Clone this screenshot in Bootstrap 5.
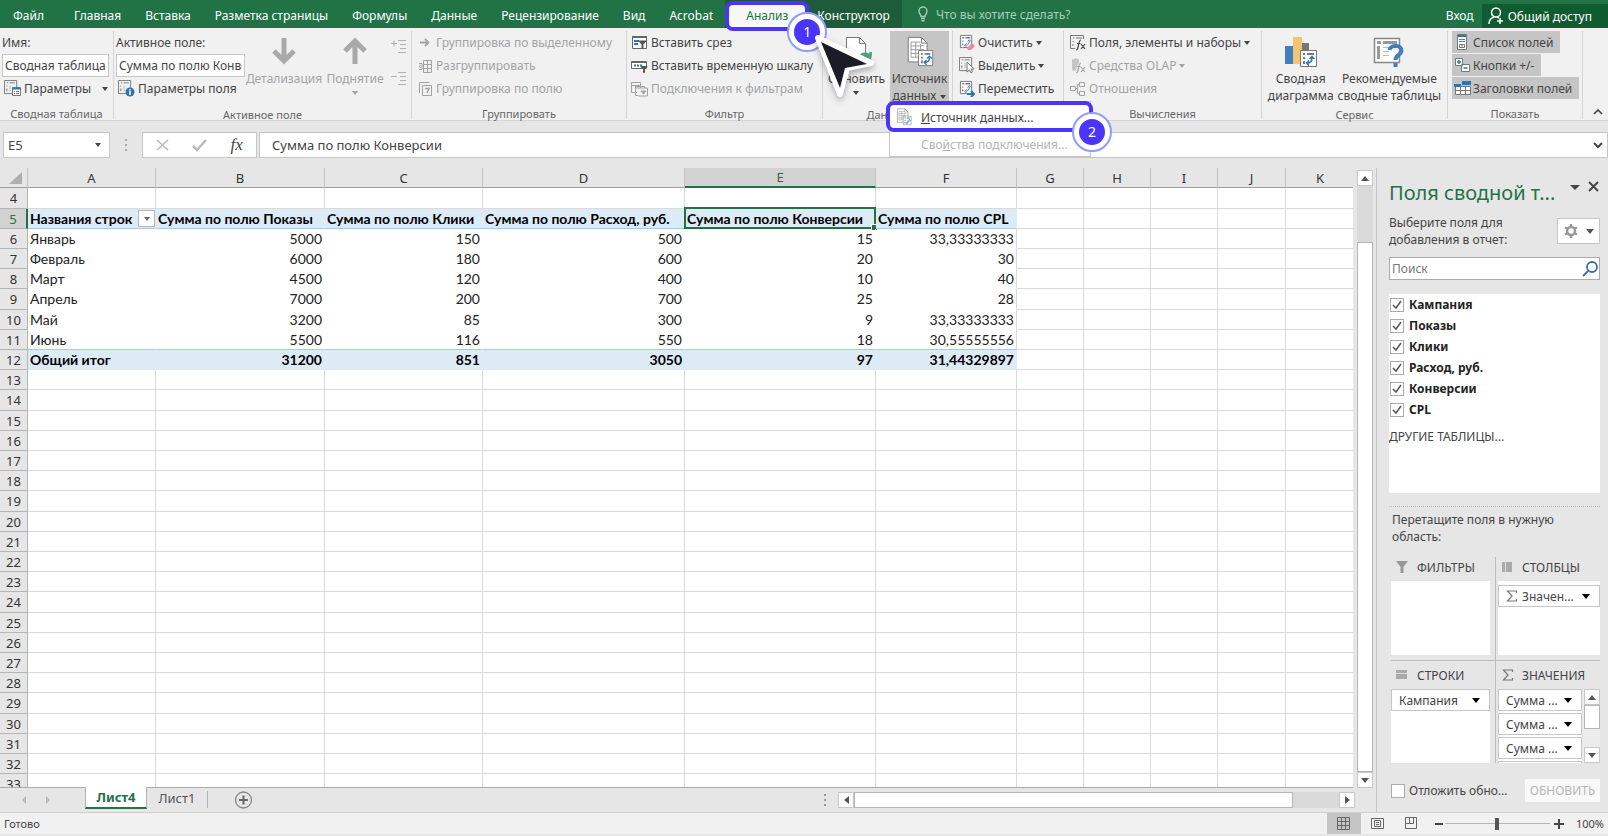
<!DOCTYPE html>
<html lang="ru">
<head>
<meta charset="utf-8">
<meta name="viewport" content="width=device-width, initial-scale=1">
<title>Сводная таблица</title>
<link href="https://cdn.jsdelivr.net/npm/bootstrap@5.3.0/dist/css/bootstrap.min.css" rel="stylesheet">
<style>
:root { --green:#217346; --deep:#0e5c2f; --chrome:#e6e6e6; --line:#d4d4d4; --accent:#4a35ff; }
body { font-family:"Noto Sans","Open Sans",sans-serif; font-size:12px; line-height:17px; color:#444; background:#fff; }
button, input { font:inherit; color:inherit; }
button { background:none; border:0; padding:0; white-space:nowrap; }
svg { display:block; flex:none; fill:none; }
svg:not([stroke]) { stroke:currentColor; }
.app { height:100vh; background:var(--chrome); padding-bottom:2px; }

/* Tab strip */
.tabstrip { height:28px; background:var(--green); color:#fff; position:relative; z-index:3; white-space:nowrap; }
.tabstrip a { color:#fff; text-decoration:none; padding:0 12px; height:28px; line-height:31px; display:block; }
.tabstrip .file-tab { padding:0 18px 0 13px; }
.tabstrip .context-tabs { background:#1d5b3a; }
.tabstrip a.current { position:relative; isolation:isolate; color:var(--green); padding:0 17px 0 21px; }
.tabstrip a.current::before { content:""; position:absolute; z-index:-1; inset:1px -4px -3px 0; background:#f7f7f7; border:4px solid var(--accent); border-radius:8px; }
.tell { color:#a9cdb8; line-height:31px; }
.share { background:var(--deep); height:24px; margin-top:4px; color:#fff; padding:0 16px 0 6px; }
.marker { position:absolute; z-index:6; width:40px; height:40px; border-radius:50%; border:2px solid #8f9bff; background:#fff; display:grid; place-items:center; }
.marker b { width:26px; height:26px; border-radius:50%; background:var(--accent); color:#fff; font-weight:400; font-size:14px; line-height:26px; text-align:center; }
.marker-1 { right:-22px; top:12px; }
.pointer { position:absolute; left:85px; top:29px; z-index:7; stroke-linejoin:round; filter:drop-shadow(0 3px 3px rgba(0,0,0,.3)); }

/* Ribbon */
.ribbon { background:#f1f1f1; border-bottom:1px solid var(--line); height:94px; padding-top:3px; }
.rgroup { flex:none; display:flex; flex-direction:column; position:relative; height:88px; border-right:1px solid #d5d5d5; }
.rgroup h6 { font-size:11px; font-weight:400; line-height:17px; margin:5px 0 0; text-align:center; color:#666; }
.rbody { height:70px; display:flex; }
.rcol > * { height:23px; display:flex; align-items:center; gap:3px; white-space:nowrap; }
.pad-s { padding-left:2px; }
.pad-m { padding-left:6px; }
.off { color:#a3a3a3; }
.rcol input, .field { background:#fff; border:1px solid #c6c6c6; height:23px; padding:0 2px; }
.big { text-align:center; height:70px; display:flex; flex-direction:column; align-items:center; white-space:nowrap; }
.big svg.pic { margin-top:5px; margin-bottom:1px; }
.big .lines { line-height:17px; margin-top:1px; }
.dd { display:inline-block; width:0; height:0; border:3px solid transparent; border-top:4px solid currentColor; border-bottom:0; margin-left:4px; flex:none; }
.pressed { background:#c5c5c5; }
.w-a{width:114px}.w-b{width:298px}.w-c{width:215px}.w-d{width:196px}.w-e{width:130px}.w-f{width:111px}.w-g{width:198px}.w-h{width:186px}.w-i{width:135px}
.toggle { background:#c5c5c5; height:22px!important; margin-bottom:1px; padding:0 7px 0 2px; align-self:flex-start; gap:2px!important; }
.source-menu { position:absolute; z-index:5; left:66px; top:70px; width:202px; height:56px; background:#fff; border:1px solid #c6c6c6; }
.source-menu button { display:flex; align-items:center; height:28px; width:100%; gap:8px; padding-left:5px; padding-top:2px; }
.source-menu button + button { padding-left:31px; color:#b4b4b4; padding-top:0; }
.source-menu::after { content:""; position:absolute; left:-4px; top:-1px; width:207px; height:31px; border:4px solid var(--accent); border-radius:8px; }
.marker-2 { right:-22px; top:10px; }

/* Formula bar */
.formula { padding:11px 0 10px 3px; font-size:13px; }
.formula > .field { height:26px; }
.fx { font:italic 17px/22px "Liberation Serif",serif; color:#444; }

/* Sheet */
.sheet { table-layout:fixed; width:1355px; border-collapse:separate; border-spacing:0; background:#fff; color:#222; font:14px/18px Lato,sans-serif; }
.sheet th { background:var(--chrome); font:13px/18px "Noto Sans",sans-serif; color:#333; text-align:center; padding:0; border-right:1px solid #b5b5b5; border-bottom:1px solid #b5b5b5; }
.sheet thead th { height:20px; border-right-color:#c2c2c2; border-bottom-color:#9f9f9f; }
.sheet td { padding:0 2px; border-right:1px solid #dadada; border-bottom:1px solid #dadada; white-space:nowrap; position:relative; }
.sheet tbody tr { height:20px; }
.sheet tbody tr:nth-child(5n+1) { height:21px; }
.sheet td.num { text-align:right; }
.sheet td.pv { border-color:#fff; }
.sheet td.pv.last { border-right-color:#dadada; }
.sheet .band td.pv { background:#ddebf7; color:#000; font-weight:700; border-right-color:#ddebf7; border-bottom-color:#a9c9e4; }
.sheet .total td.pv { border-bottom-color:#ddebf7; }
.sheet .pre-total td.pv { border-bottom-color:#a9c9e4; }
.sheet th.on { background:#d2d2d2; color:var(--green); }
.sheet thead th.on { border-bottom:2px solid var(--green); }
.sheet tbody th.on { border-right:2px solid var(--green); }
.sel::before { content:""; position:absolute; inset:-2px -1px -1px -1px; border:2px solid var(--green); }
.sel::after { content:""; position:absolute; right:-3px; bottom:-3px; width:5px; height:5px; background:var(--green); border:1px solid #fff; box-sizing:content-box; }
.pick { position:absolute; right:0; top:1px; width:17px; height:17px; background:#fff; border:1px solid #b5b5b5; display:grid; place-items:center; color:#666; }
.pick .dd { margin:0; }
.edge { border-bottom:1px solid #ababab; }
.vscroll { width:23px; padding:2px 3px 0 4px; }
.sbtn { width:16px; height:16px; background:#fff; border:1px solid #c8c8c8; display:grid; place-items:center; color:#555; flex:none; }
.track { background:#dadada; }
.thumb { background:#fff; border:1px solid #b5b5b5; }
.tri { fill:currentColor; stroke:none; }
.sheetbar { height:24px; }
.sheetbar .tab-on { background:#fff; border:1px solid #b5b5b5; border-width:0 1px; border-bottom:2px solid var(--green); color:var(--green); font-weight:700; width:62px; height:22px; line-height:18px; margin-top:-1px; font-size:13px; }
.sheetbar .tab-off { font-size:13px; line-height:18px; width:60px; height:20px; color:#555; }
.hbar { width:556px; }
.hbar .thumb, .hbar .track { height:16px; }
.statusbar { height:22px; background:#f1f1f1; border-top:1px solid #cfcfcf; font-size:11px; padding-left:4px; }
.statusbar .view { width:34px; height:21px; display:grid; place-items:center; color:#666; }
.zoomer { appearance:none; width:105px; height:14px; background:linear-gradient(#b5b5b5,#b5b5b5) center/100% 1px no-repeat; }
.zoomer::-webkit-slider-thumb { appearance:none; width:4px; height:12px; background:#555; }

/* Field pane */
.pane { width:232px; border-left:1px solid #c6c6c6; padding:12px 8px 0 12px; flex:none; }
.pane h1 { font-size:20px; line-height:26px; font-weight:400; color:var(--green); margin:0; white-space:nowrap; }
.search { height:23px; border:1px solid #ababab; background:#fff; margin-top:9px; }
.search input { border:0; background:none; outline:0; padding:0 2px; width:100%; min-width:0; }
.search input::placeholder { color:#777; opacity:1; }
.fields { background:#fff; height:199px; margin-top:14px; }
.fields label { display:flex; align-items:center; height:21px; gap:5px; padding-left:1px; font-weight:700; color:#222; }
.box { appearance:none; width:14px; height:14px; border:1px solid #ababab; background:#fff; margin:0; flex:none; }
.box:checked { background:#fff url("data:image/svg+xml,%3Csvg xmlns='http://www.w3.org/2000/svg' viewBox='0 0 12 12'%3E%3Cpath d='M2 6l3 3 5-7' fill='none' stroke='%23555' stroke-width='1.5'/%3E%3C/svg%3E") center/12px; }
.hint { border-top:1px dotted #bbb; margin:13px 0 12px; padding:4px 0 0 3px; }
.zones { display:grid; grid-template-columns:105px 1fr; padding-left:2px; }
.zone { height:103px; padding-left:2px; }
.zone:nth-child(odd) { border-right:1px solid #bdbdbd; padding-right:5px; padding-left:0; }
.zone:nth-child(n+3) { border-top:1px solid #bdbdbd; padding-top:4px; }
.zone h2 { font-size:12px; line-height:17px; font-weight:400; margin:0; height:24px; display:flex; align-items:center; gap:8px; padding:0 0 4px 4px; }
.zone h2 svg { color:#999; }
.zwell { background:#fff; height:74px; overflow:hidden; }
.pill { display:flex; align-items:center; justify-content:space-between; width:100%; height:22px; border:1px solid #c6c6c6; background:#fff; padding:0 9px 0 7px; margin-bottom:2px; }
.pill .dd, .solid .dd { border-width:5px 4px 0; color:#000; margin:0; }
.solid .dd { color:#555; }
.update { background:#f9f9f9; color:#b5b5b5; height:23px; width:75px; text-align:center; }
</style>
</head>
<body>
<svg width="0" height="0" class="position-absolute" aria-hidden="true">
  <defs>
    <symbol id="pivot" viewBox="0 0 16 16"><path d="M.5.5h13v14H.5zM3 3h1.500M6 3h5.500M3 6v1M3 9v3" stroke="#777"/><path d="M6.500 6v6" stroke="#bbb"/></symbol>
    <symbol id="swirl" viewBox="0 0 16 16"><path d="M1.500 1.500h12v13h-12z" fill="#fff" stroke="#777"/><path d="M3.500 4h2M7 4h5M4 7v1M4 10v2" stroke="#777" stroke-width="1.500"/><path d="M7 12c3 0 4-2 4-5M9 8l2-2 2 2M8 10l-2 2 2 2" stroke="#2e75b6"/></symbol>
    <symbol id="sheets" viewBox="0 0 30 34"><path d="M2.500 1.500h14l6 6v20h-20z" fill="#fff" stroke="#777"/><path d="M16.500 1.500v6h6" stroke="#777"/><path d="M5.500 6.500h10M5.500 10.500h14M5.500 14.500h14M5.500 18.500h14M5.500 22.500h14M5.500 6.500v16M10.500 6.500v16M15.500 8.500v14" stroke="#999"/><path d="M13.500 15.500h15v16h-15z" fill="#fff" stroke="#777"/><path d="M16 19h2M20 19h6M17 22v2M17 26v3" stroke="#777" stroke-width="2"/><path d="M20 28c3 0 5-2 5-5M22.500 24l2.500-2.500 2.500 2.500M22 25.500L19.500 28l2.500 2.500" stroke="#2e75b6" stroke-width="1.500"/></symbol>
    <symbol id="sigma" viewBox="0 0 12 12"><path d="M10.500 3V1h-9l4.500 5-4.500 5h9V9" stroke="#777" stroke-width="1.200"/></symbol>
  </defs>
</svg>

<div class="app d-flex flex-column overflow-hidden">
  <header class="tabstrip d-flex">
    <nav class="d-flex" aria-label="Вкладки ленты">
      <a class="file-tab" href="#">Файл</a><a href="#">Главная</a><a href="#">Вставка</a><a href="#">Разметка страницы</a><a href="#">Формулы</a><a href="#">Данные</a><a href="#">Рецензирование</a><a href="#">Вид</a><a href="#">Acrobat</a>
      <div class="context-tabs d-flex">
        <a class="current" href="#" aria-current="page">Анализ
          <span class="marker marker-1"><b>1</b></span>
          <svg class="pointer" width="64" height="74" viewBox="0 0 64 74"><path d="M8 9l53 25-24 5-7 26z" fill="#fff" stroke="#fff" stroke-width="6"/><path d="M11 13l46 22-22 4-5 20z" fill="#1a1c26" stroke="none"/></svg>
        </a>
        <a href="#">Конструктор</a>
      </div>
    </nav>
    <div class="tell d-flex align-items-center ps-3 gap-2">
      <svg width="10" height="16" viewBox="0 0 10 16" stroke-width="1.400"><path d="M3 10.500C3 8.500 1 8 1 5a4 4 0 0 1 8 0c0 3-2 3.500-2 5.500zM3 12.500h4M3.500 14.800h3"/></svg>
      <span>Что вы хотите сделать?</span>
    </div>
    <div class="ms-auto d-flex">
      <a class="px-2" href="#">Вход</a>
      <button class="share d-flex align-items-center gap-1"><svg width="16" height="18" viewBox="0 0 16 18" stroke-width="1.500"><circle cx="8" cy="5.500" r="4.500"/><path d="M1 17c0-4 2-6 5-7M9 10l2 1M12 11v6M9 14h6"/></svg>Общий доступ</button>
    </div>
  </header>

  <section class="ribbon d-flex" aria-label="Лента">
    <div class="rgroup w-a">
      <div class="rbody"><div class="rcol flex-fill pad-s pe-1">
        <label for="pname">Имя:</label>
        <input id="pname" class="w-100" value="Сводная таблица1">
        <button class="pad-s"><svg width="17" height="17"><use href="#pivot" width="15" height="15"/><path d="M8.500 7.500h8v8h-8z" fill="#fff" stroke="#777"/><path d="M9 8.500h7" stroke="#2e75b6" stroke-width="2"/><path d="M10 11.500h1M12 11.500h3M10 13.500h1M12 13.500h3" stroke="#777"/></svg>Параметры<i class="dd ms-2"></i></button>
      </div></div>
      <h6>Сводная таблица</h6>
    </div>
    <div class="rgroup w-b">
      <div class="rbody">
        <div class="rcol pad-s" style="width:131px">
          <label for="afield">Активное поле:</label>
          <input id="afield" class="w-100" value="Сумма по полю Конверсии">
          <button class="pad-s"><svg width="17" height="17"><use href="#pivot" width="15" height="15"/><circle cx="12" cy="12" r="4.500" fill="#2e75b6" stroke="none"/><path d="M12 9v1.500M12 11v4" stroke="#fff" stroke-width="1.500"/></svg>Параметры поля</button>
        </div>
        <button class="big off" style="width:78px"><svg class="pic" width="30" height="32" viewBox="0 0 30 32" stroke-width="5" stroke="#a9a9a9"><path d="M15 2v23M5 15l10 10 10-10"/></svg><span class="lines">Детализация</span></button>
        <button class="big off" style="width:64px"><svg class="pic" width="30" height="32" viewBox="0 0 30 32" stroke-width="5" stroke="#a9a9a9"><path d="M15 28V5M5 15L15 5l10 10"/></svg><span class="lines">Поднятие<br><i class="dd m-0 align-top mt-1"></i></span></button>
        <div class="off d-flex flex-column gap-3 pt-2 ps-1">
          <button aria-label="Развернуть поле"><svg width="16" height="16" viewBox="0 0 16 16"><path d="M7 1.500h8M9 5.500h6M9 9.500h6M7 13.500h8M0 4.500h6M3 1.500v6" stroke="#b0b0b0"/></svg></button>
          <button aria-label="Свернуть поле"><svg width="16" height="16" viewBox="0 0 16 16"><path d="M7 1.500h8M9 5.500h6M9 9.500h6M7 13.500h8M0 5.500h6" stroke="#b0b0b0"/></svg></button>
        </div>
      </div>
      <h6>Активное поле</h6>
    </div>
    <div class="rgroup w-c">
      <div class="rbody rcol flex-column pad-m off">
        <button><svg width="15" height="16" viewBox="0 0 15 16"><path d="M2 7.500h8M7 4l3.500 3.500L7 11" stroke-width="1.800"/></svg>Группировка по выделенному</button>
        <button><svg width="15" height="16" viewBox="0 0 15 16"><path d="M5.500 2.500h8v12h-8zM9.500 2.500v12M5.500 6.500h8M5.500 10.500h8M1 5.500h3v6H1M3 7l-2 1.500L3 10"/></svg>Разгруппировать</button>
        <button><svg width="15" height="16" viewBox="0 0 15 16"><path d="M1.500 12V1.500h10M4.500 4.500h9v10h-9z"/><path d="M7 7.500h4L9 12" stroke-width="1.500"/></svg>Группировка по полю</button>
      </div>
      <h6>Группировать</h6>
    </div>
    <div class="rgroup w-d">
      <div class="rbody rcol flex-column ps-1">
        <button><svg width="17" height="16" viewBox="0 0 17 16"><path d="M1.500 1.500h14v12h-14z" fill="#fff" stroke="#666"/><path d="M1 2h15" stroke="#666" stroke-width="2"/><path d="M3 6h5M3 9h4" stroke="#2e75b6" stroke-width="2"/><path d="M8 6h7l-3 3.500V13h-1V9.500z" fill="#555" stroke="#555"/></svg>Вставить срез</button>
        <button><svg width="17" height="16" viewBox="0 0 17 16"><path d="M.5 3.500h15v7H.5z" fill="#fff" stroke="#666"/><path d="M1 4h14" stroke="#666" stroke-width="2"/><path d="M3 7.500h8" stroke="#2e75b6" stroke-width="2" stroke-dasharray="2 1"/><path d="M10 8.500h6l-2.500 3v3h-1v-3z" fill="#555" stroke="#555"/></svg>Вставить временную шкалу</button>
        <button class="off"><svg width="17" height="16" viewBox="0 0 17 16"><path d="M.5 1.500h9v10h-9zM1 4.500h8M4.500 5.500h9v9h-9z"/><path d="M4.500 7h12v8h-9" fill="#f1f1f1"/><path d="M10 10h5l-2.500 3z" fill="currentColor"/></svg>Подключения к фильтрам</button>
      </div>
      <h6>Фильтр</h6>
    </div>
    <div class="rgroup w-e">
      <div class="rbody">
        <button class="big" style="width:67px"><svg class="pic" width="30" height="32" viewBox="0 0 30 32"><path d="M4.500 1.500h13l6 6v20h-19z" fill="#fff" stroke="#777"/><path d="M17.500 1.500v6h6" stroke="#777"/><path d="M18 21c2-4 8-4 10 0l1-5M28 21h-6" stroke="#4ca582" stroke-width="3"/></svg><span class="lines">Обновить<br><i class="dd m-0 align-top mt-1"></i></span></button>
        <button class="big pressed" style="width:59px" aria-expanded="true"><svg class="pic" width="30" height="32"><use href="#sheets"/></svg><span class="lines">Источник<br>данных<i class="dd align-middle"></i></span></button>
      </div>
      <h6>Данные</h6>
      <div class="source-menu">
        <button><svg width="18" height="18"><use href="#sheets"/></svg><span><u>И</u>сточник данных...</span></button>
        <button><span>Сво<u>й</u>ства подключения...</span></button>
        <span class="marker marker-2"><b>2</b></span>
      </div>
    </div>
    <div class="rgroup w-f">
      <div class="rbody rcol flex-column pad-m">
        <button><svg width="16" height="17"><use href="#swirl" width="15" height="15"/><path d="M8 14l5-5 3 3-4 4H9z" fill="#ee8796" stroke="none"/></svg>Очистить<i class="dd ms-0"></i></button>
        <button><svg width="16" height="17"><use href="#pivot" width="15" height="15"/><path d="M8 5v10l2.500-2 1.500 3 1.500-1-1.500-3h3z" fill="#fff" stroke="#777"/></svg>Выделить<i class="dd ms-0"></i></button>
        <button><svg width="16" height="17"><use href="#swirl" width="15" height="15"/><path d="M8 14h7M12 11l3 3-3 3" stroke="#2e75b6" stroke-width="2"/></svg>Переместить</button>
      </div>
    </div>
    <div class="rgroup w-g">
      <div class="rbody rcol flex-column pad-m">
        <button><svg width="16" height="17" viewBox="0 0 16 17"><path d="M5 14.500H.5v-13h13V5M3 4h1.500M6 4h6M3 7v1M3 10v2" stroke="#777"/><path d="M6 16c2 0 2-2 2.500-5S9.500 6 11 6M7 9.500h3.500M11 10l4 5M15 10l-4 5" stroke="#444" stroke-width="1.200"/></svg>Поля, элементы и наборы<i class="dd ms-0"></i></button>
        <button class="off"><svg width="16" height="17" viewBox="0 0 16 17"><path d="M2 3c0-2 7-2 7 0v3c-3 2-2 8-4 8-2 0-3-1-3-1z" fill="#c6c6c6" stroke="none"/><path d="M6 16c2 0 2-2 2.500-5S9.500 6 11 6M7 9.500h3.500M11 10l4 5M15 10l-4 5" stroke-width="1.200"/></svg>Средства OLAP<i class="dd ms-0"></i></button>
        <button class="off"><svg width="16" height="16" viewBox="0 0 16 16"><path d="M.5 5.500h5v4h-5zM9.500 1.500h5v4h-5zM9.500 10.500h5v4h-5zM5.500 7.500h2M9.500 3.500h-2v9h2"/></svg>Отношения</button>
      </div>
      <h6>Вычисления</h6>
    </div>
    <div class="rgroup w-h">
      <div class="rbody justify-content-center gap-1">
        <button class="big"><svg class="pic" width="34" height="32" viewBox="0 0 34 32"><path d="M1 10h8v18H1z" fill="#3f7fbf" stroke="none"/><path d="M9 1h9v27H9z" fill="#f2c572" stroke="none"/><path d="M18 7h7v8h-7z" fill="#777" stroke="none"/><path d="M16.500 14.500h16v16h-16z" fill="#fff" stroke="#777"/><path d="M19 18h2M23 18h7M20 21v2M20 25v3" stroke="#777" stroke-width="2"/><path d="M23 27c3 0 5-2 5-5M25.500 23l2.500-2.500 2.500 2.500M25 24.500L22.500 27l2.500 2.500" stroke="#2e75b6" stroke-width="1.500"/></svg><span class="lines">Сводная<br>диаграмма</span></button>
        <button class="big"><svg class="pic" width="32" height="32" viewBox="0 0 32 32"><path d="M1.500 2.500h25v24h-25z" fill="#fff" stroke="#888" stroke-width="1.500"/><path d="M4 6.500h4M10 6.500h14M5.500 10v13" stroke="#999" stroke-width="3"/><path d="M10 11.500h12M10 15.500h6M10 19.500h6" stroke="#bbb"/><path d="M16.500 14c1-6 13-5 12 1-.5 4-6 4-6 9" stroke="#3f7fbf" stroke-width="4"/><path d="M20.500 27h4v4h-4z" fill="#3f7fbf" stroke="none"/></svg><span class="lines">Рекомендуемые<br>сводные таблицы</span></button>
      </div>
      <h6>Сервис</h6>
    </div>
    <div class="rgroup w-i">
      <div class="rbody rcol flex-column ps-1">
        <button class="toggle"><svg width="17" height="16" viewBox="0 0 17 16"><path d="M3.500.5h9v15h-9z" fill="#fff" stroke="#777"/><path d="M4 2h8" stroke="#2e75b6" stroke-width="2"/><path d="M5 5.500h6M5 7.500h6M5.500 10.500h5v3h-5zM8 10.500v3" stroke="#777"/></svg>Список полей</button>
        <button class="toggle"><svg width="17" height="16" viewBox="0 0 17 16"><path d="M1.500 1.500h7v7h-7zM7.500 7.500h8v7h-8z" fill="#fff" stroke="#777"/><path d="M3 5h4M5 3v4M9.500 11h4" stroke="#2e75b6" stroke-width="1.500"/></svg>Кнопки +/-</button>
        <button class="toggle"><svg width="17" height="16" viewBox="0 0 17 16"><path d="M1.500 6.500h15v8h-15zM6.500 6.500v8M11.500 6.500v8M1.500 10.500h15" fill="#fff" stroke="#777"/><path d="M0 4h7v3H0zM8 1h9v4H8z" fill="#2e75b6" stroke="none"/></svg>Заголовки полей</button>
      </div>
      <h6>Показать</h6>
    </div>
    <button class="ms-auto align-self-end pe-1 pb-1" aria-label="Свернуть ленту"><svg width="12" height="8" viewBox="0 0 12 8" stroke-width="1.600"><path d="M2 6l4-4 4 4"/></svg></button>
  </section>

  <section class="formula d-flex" aria-label="Строка формул">
    <button class="field d-flex align-items-center justify-content-between px-1" style="width:107px"><span>E5</span><i class="dd me-1"></i></button>
    <svg class="mx-2 align-self-center" width="16" height="14" viewBox="0 0 16 14"><path d="M7 2h2M7 7h2M7 12h2" stroke="#aaa" stroke-width="2"/></svg>
    <div class="field d-flex align-items-center justify-content-around" style="width:115px">
      <button aria-label="Отмена"><svg width="14" height="14" viewBox="0 0 14 14" stroke="#bbb" stroke-width="1.600"><path d="M1 2l11 10M12 2L1 12"/></svg></button>
      <button aria-label="Ввод"><svg width="16" height="14" viewBox="0 0 16 14" stroke="#bbb" stroke-width="2.500"><path d="M1 8l4 4 9-10"/></svg></button>
      <button class="fx" aria-label="Вставить функцию">fx</button>
    </div>
    <div class="field d-flex align-items-center flex-fill pad-s p-0 pe-1" style="margin-left:2px">
      <input class="border-0 bg-transparent flex-fill p-0 ps-2 ms-1" value="Сумма по полю Конверсии" aria-label="Формула">
      <svg width="10" height="8" viewBox="0 0 10 8" stroke-width="2"><path d="M1 2l4 4 4-4"/></svg>
    </div>
  </section>

  <div class="d-flex flex-fill" style="min-height:0">
    <main class="flex-fill d-flex flex-column" style="min-width:0">
      <div class="flex-fill d-flex" style="min-height:0">
        <div class="edge flex-fill overflow-hidden">
          <table class="sheet">
            <colgroup><col style="width:28px"><col style="width:128px"><col style="width:169px"><col style="width:158px"><col style="width:202px"><col style="width:191px"><col style="width:141px"><col style="width:67px"><col style="width:67px"><col style="width:67px"><col style="width:68px"><col style="width:69px"></colgroup>
            <thead><tr><th><svg class="ms-auto me-1" width="14" height="14"><path d="M13 1v12H0z" fill="#b0b0b0" stroke="none"/></svg></th><th>A</th><th>B</th><th>C</th><th>D</th><th class="on">E</th><th>F</th><th>G</th><th>H</th><th>I</th><th>J</th><th>K</th></tr></thead>
            <tbody id="cells"></tbody>
          </table>
        </div>
        <div class="vscroll d-flex flex-column flex-shrink-0">
          <button class="sbtn" aria-label="Вверх"><svg width="8" height="5"><path class="tri" d="M4 0l4 5H0z"/></svg></button>
          <div class="track" style="flex:56"></div>
          <div class="thumb" style="flex:531"></div>
          <button class="sbtn" aria-label="Вниз"><svg width="8" height="5"><path class="tri" d="M0 0h8L4 5z"/></svg></button>
        </div>
      </div>
      <div class="sheetbar d-flex">
        <div class="d-flex align-items-center ps-3 gap-3" style="width:85px">
          <svg class="ms-1" width="8" height="8"><path d="M6 0v8L2 4z" fill="#bbb" stroke="none"/></svg><svg width="8" height="8"><path d="M2 0v8l4-4z" fill="#bbb" stroke="none"/></svg>
        </div>
        <button class="tab-on">Лист4</button>
        <button class="tab-off">Лист1</button>
        <svg class="align-self-center" width="60" height="20" viewBox="0 0 60 20"><path d="M.5 1v17" stroke="#b0b0b0"/><circle cx="36.500" cy="10" r="8" stroke="#888" stroke-width="1.300"/><path d="M32 10h9M36.500 5.500v9" stroke="#666" stroke-width="2"/></svg>
        <div class="hbar ms-auto d-flex align-items-center">
          <svg width="18" height="14" viewBox="0 0 18 14"><path d="M4 2h2M4 7h2M4 12h2" stroke="#999" stroke-width="2"/></svg>
          <button class="sbtn" aria-label="Влево"><svg width="5" height="8"><path class="tri" d="M5 0v8L0 4z"/></svg></button>
          <div class="thumb" style="flex:440"></div>
          <div class="track" style="flex:46"></div>
          <button class="sbtn" aria-label="Вправо" style="margin-right:21px"><svg width="5" height="8"><path class="tri" d="M0 0v8l5-4z"/></svg></button>
        </div>
      </div>
    </main>

    <aside class="pane">
      <div class="d-flex">
        <h1>Поля сводной т...</h1>
        <div class="ms-auto d-flex gap-2 align-items-start">
          <button aria-label="Параметры области"><svg width="10" height="14"><path class="tri" d="M0 5h10l-5 5z"/></svg></button>
          <button aria-label="Закрыть"><svg width="12" height="13" viewBox="0 0 12 13" stroke-width="1.800"><path d="M1 2l9 9M10 2l-9 9"/></svg></button>
        </div>
      </div>
      <div class="d-flex justify-content-between align-items-center mt-2">
        <div>Выберите поля для<br>добавления в отчет:</div>
        <button class="field solid d-flex align-items-center justify-content-around" style="height:26px;width:43px" aria-label="Сервис"><svg width="16" height="16" viewBox="0 0 16 16" stroke="#999"><circle cx="8" cy="8" r="4" stroke-width="2.500"/><path d="M8 1v2M8 13v2M2 4.500l2 1M12 10.500l2 1M2 11.500l2-1M12 5.500l2-1" stroke-width="2.500"/></svg><i class="dd"></i></button>
      </div>
      <div class="search d-flex align-items-center">
        <input type="text" placeholder="Поиск" aria-label="Поиск"><svg width="18" height="18" viewBox="0 0 18 18" stroke="#3d6da8" stroke-width="1.800"><circle cx="11" cy="7" r="5"/><path d="M7 11l-5 5"/></svg>
      </div>
      <div class="fields">
        <label><input class="box" type="checkbox" checked>Кампания</label>
        <label><input class="box" type="checkbox" checked>Показы</label>
        <label><input class="box" type="checkbox" checked>Клики</label>
        <label><input class="box" type="checkbox" checked>Расход, руб.</label>
        <label><input class="box" type="checkbox" checked>Конверсии</label>
        <label><input class="box" type="checkbox" checked>CPL</label>
        <a class="d-block mt-2 text-decoration-none text-reset" href="#">ДРУГИЕ ТАБЛИЦЫ...</a>
      </div>
      <p class="hint">Перетащите поля в нужную<br>область:</p>
      <div class="zones">
        <div class="zone">
          <h2><svg width="14" height="14" viewBox="0 0 14 14"><path d="M1 1h12L8.500 7v6h-3V7z" fill="#999" stroke="none"/></svg>ФИЛЬТРЫ</h2>
          <div class="zwell"></div>
        </div>
        <div class="zone">
          <h2><svg width="12" height="12"><path d="M0 1h3v10H0zM3 1h4v10H3zM7 1h3v10H7z" fill="#aaa" stroke="none"/><path d="M3.500 1v10" stroke="#ddd"/></svg>СТОЛБЦЫ</h2>
          <div class="zwell"><button class="pill mt-1"><span class="d-flex align-items-center gap-1"><svg width="12" height="12"><use href="#sigma"/></svg>Значен...</span><i class="dd"></i></button></div>
        </div>
        <div class="zone">
          <h2><svg width="14" height="12"><path d="M1 1h11v9H1z" fill="#aaa" stroke="none"/><path d="M1 4.500h11" stroke="#ddd"/></svg>СТРОКИ</h2>
          <div class="zwell"><button class="pill">Кампания<i class="dd"></i></button></div>
        </div>
        <div class="zone">
          <h2><svg width="12" height="12"><use href="#sigma"/></svg>ЗНАЧЕНИЯ</h2>
          <div class="zwell d-flex">
            <div class="flex-fill"><button class="pill">Сумма ...<i class="dd"></i></button><button class="pill">Сумма ...<i class="dd"></i></button><button class="pill">Сумма ...<i class="dd"></i></button><div class="pill"></div></div>
            <div class="d-flex flex-column" style="width:18px;background:#ececec;padding-left:2px">
              <button class="sbtn" aria-label="Вверх"><svg width="8" height="5"><path class="tri" d="M4 0l4 5H0z"/></svg></button>
              <div class="thumb" style="height:24px"></div>
              <button class="sbtn mt-auto" aria-label="Вниз"><svg width="8" height="5"><path class="tri" d="M0 0h8L4 5z"/></svg></button>
            </div>
          </div>
        </div>
      </div>
      <div class="d-flex align-items-center justify-content-between pad-s mt-3">
        <label class="d-flex align-items-center gap-1 text-nowrap"><input class="box" type="checkbox">Отложить обно...</label>
        <button class="update" disabled>ОБНОВИТЬ</button>
      </div>
    </aside>
  </div>

  <footer class="statusbar d-flex align-items-center">
    <span>Готово</span>
    <div class="ms-auto d-flex align-items-center">
      <button class="view pressed" aria-label="Обычный"><svg width="13" height="13"><path d="M.5.5h12v12H.5zM4.500 0v13M8.500 0v13M0 4.500h13M0 8.500h13"/></svg></button>
      <button class="view" aria-label="Разметка страницы"><svg width="13" height="13"><path d="M.5 1.500h12v10H.5zM3.500 3.500h6v6h-6zM5 5.500h3M5 7.500h3"/></svg></button>
      <button class="view" aria-label="Страничный режим"><svg width="13" height="13"><path d="M.5.5h11v11H.5zM4.500.5v6h-4M8.500.5v6h-4"/></svg></button>
      <button class="ms-1" aria-label="Уменьшить"><svg width="12" height="12"><path d="M2 6h8" stroke-width="2"/></svg></button>
      <input class="zoomer" type="range" min="0" max="100" value="50" aria-label="Масштаб">
      <button class="mx-1" aria-label="Увеличить"><svg width="10" height="12"><path d="M0 6h10M5 1v10" stroke-width="2"/></svg></button>
      <span class="ps-2 pe-1">100%</span>
    </div>
  </footer>
</div>

<script>
const pivot = {
  5: ['Названия строк', 'Сумма по полю Показы', 'Сумма по полю Клики', 'Сумма по полю Расход, руб.', 'Сумма по полю Конверсии', 'Сумма по полю CPL'],
  6: ['Январь', '5000', '150', '500', '15', '33,33333333'],
  7: ['Февраль', '6000', '180', '600', '20', '30'],
  8: ['Март', '4500', '120', '400', '10', '40'],
  9: ['Апрель', '7000', '200', '700', '25', '28'],
  10: ['Май', '3200', '85', '300', '9', '33,33333333'],
  11: ['Июнь', '5500', '116', '550', '18', '30,55555556'],
  12: ['Общий итог', '31200', '851', '3050', '97', '31,44329897']
};
const rowClass = { 5: 'band', 11: 'pre-total', 12: 'band total' };
let html = '';
for (let r = 4; r <= 33; r++) {
  html += `<tr class="${rowClass[r] || ''}"><th${r === 5 ? ' class="on"' : ''}>${r}</th>`;
  for (let c = 0; c < 11; c++) {
    const data = pivot[r] && c < 6;
    const cls = [data && 'pv', data && c === 5 && 'last', data && c > 0 && r > 5 && 'num', r === 5 && c === 4 && 'sel'].filter(Boolean).join(' ');
    const pick = r === 5 && c === 0 ? '<button class="pick" aria-label="Фильтр строк"><i class="dd"></i></button>' : '';
    html += `<td class="${cls}">${data ? pivot[r][c] : ''}${pick}</td>`;
  }
  html += '</tr>';
}
document.getElementById('cells').innerHTML = html;
</script>
<script src="https://cdn.jsdelivr.net/npm/bootstrap@5.3.0/dist/js/bootstrap.bundle.min.js"></script>
</body>
</html>
